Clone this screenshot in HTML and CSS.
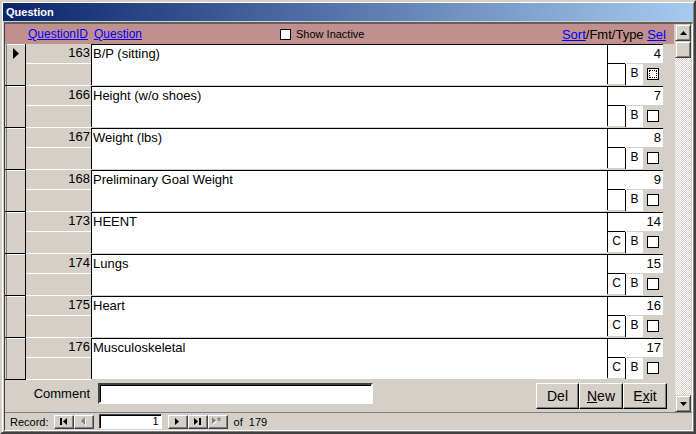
FILE: index.html
```html
<!DOCTYPE html>
<html>
<head>
<meta charset="utf-8">
<title>Question</title>
<link rel="stylesheet" href="styles.css">
</head>
<body>
<div class="window">
  <div class="titlebar">Question</div>
  <div class="client">
    <div class="main">
      <div class="form">
        <div class="hdr">
          <div class="h-id"><a class="lnk">QuestionID</a></div>
          <div class="h-q"><a class="lnk">Question</a></div>
          <div class="h-show"><span class="hcb"></span>Show Inactive</div>
          <div class="h-sort"><a class="lnk">Sort</a>/Fmt/Type <a class="lnk">Sel</a></div>
        </div>
        <div class="detail">
          <div class="row">
            <div class="sel"><svg class="cur" width="7" height="11" viewBox="0 0 7 11"><path d="M0 0L6 5.5L0 11Z"/></svg></div>
            <div class="idc"><div class="idv">163</div><div class="idb"></div></div>
            <div class="qbox">B/P (sitting)</div>
            <div class="srt"><div class="sv">4</div><div class="sb"><span class="cbx"></span><span class="bbx">B</span><span class="chk"><span class="focus"></span></span></div></div>
          </div>
          <div class="row">
            <div class="sel"></div>
            <div class="idc"><div class="idv">166</div><div class="idb"></div></div>
            <div class="qbox">Height (w/o shoes)</div>
            <div class="srt"><div class="sv">7</div><div class="sb"><span class="cbx"></span><span class="bbx">B</span><span class="chk"></span></div></div>
          </div>
          <div class="row">
            <div class="sel"></div>
            <div class="idc"><div class="idv">167</div><div class="idb"></div></div>
            <div class="qbox">Weight (lbs)</div>
            <div class="srt"><div class="sv">8</div><div class="sb"><span class="cbx"></span><span class="bbx">B</span><span class="chk"></span></div></div>
          </div>
          <div class="row">
            <div class="sel"></div>
            <div class="idc"><div class="idv">168</div><div class="idb"></div></div>
            <div class="qbox">Preliminary Goal Weight</div>
            <div class="srt"><div class="sv">9</div><div class="sb"><span class="cbx"></span><span class="bbx">B</span><span class="chk"></span></div></div>
          </div>
          <div class="row">
            <div class="sel"></div>
            <div class="idc"><div class="idv">173</div><div class="idb"></div></div>
            <div class="qbox">HEENT</div>
            <div class="srt"><div class="sv">14</div><div class="sb"><span class="cbx">C</span><span class="bbx">B</span><span class="chk"></span></div></div>
          </div>
          <div class="row">
            <div class="sel"></div>
            <div class="idc"><div class="idv">174</div><div class="idb"></div></div>
            <div class="qbox">Lungs</div>
            <div class="srt"><div class="sv">15</div><div class="sb"><span class="cbx">C</span><span class="bbx">B</span><span class="chk"></span></div></div>
          </div>
          <div class="row">
            <div class="sel"></div>
            <div class="idc"><div class="idv">175</div><div class="idb"></div></div>
            <div class="qbox">Heart</div>
            <div class="srt"><div class="sv">16</div><div class="sb"><span class="cbx">C</span><span class="bbx">B</span><span class="chk"></span></div></div>
          </div>
          <div class="row">
            <div class="sel"></div>
            <div class="idc"><div class="idv">176</div><div class="idb"></div></div>
            <div class="qbox">Musculoskeletal</div>
            <div class="srt"><div class="sv">17</div><div class="sb"><span class="cbx">C</span><span class="bbx">B</span><span class="chk"></span></div></div>
          </div>
        </div>
        <div class="footer">
          <div class="cmt-l">Comment</div>
          <div class="cmt"></div>
          <div class="btns">
            <button class="btn b-del">Del</button>
            <button class="btn b-new"><u>N</u>ew</button>
            <button class="btn b-exit">E<u>x</u>it</button>
          </div>
        </div>
      </div>
      <div class="vscroll">
        <div class="sbtn"><svg width="7" height="4" viewBox="0 0 7 4"><path d="M0 4L3.5 0L7 4Z"/></svg></div>
        <div class="sbtn thumb"></div>
        <div class="track"></div>
        <div class="sbtn"><svg width="7" height="4" viewBox="0 0 7 4"><path d="M0 0L7 0L3.5 4Z"/></svg></div>
      </div>
    </div>
    <div class="nav">
      <span class="rec">Record:</span>
      <div class="nbtn n-first"><svg width="8" height="7" viewBox="0 0 8 7"><rect x="0" y="0" width="2" height="7"/><path d="M7 0L7 7L3 3.5Z"/></svg></div>
      <div class="nbtn dis"><svg width="6" height="9" viewBox="0 0 6 9"><path class="hl" d="M5 1L5 9L1 5Z"/><path d="M4 0L4 8L0 4Z"/></svg></div>
      <div class="nbox">1</div>
      <div class="nbtn n-next"><svg width="5" height="7" viewBox="0 0 5 7"><path d="M0 0L4 3.5L0 7Z"/></svg></div>
      <div class="nbtn"><svg width="8" height="7" viewBox="0 0 8 7"><path d="M0 0L4 3.5L0 7Z"/><rect x="5" y="0" width="2" height="7"/></svg></div>
      <div class="nbtn dis"><svg width="12" height="9" viewBox="0 0 12 9"><path class="hl" d="M1 1L5 4.5L1 8Z"/><path d="M0 0L4 3.5L0 7Z"/><text class="star" x="5" y="8">*</text></svg></div>
      <span class="of">of&nbsp; 179</span>
    </div>
  </div>
</div>
</body>
</html>
```

FILE: styles.css
```css
* { box-sizing: border-box; margin: 0; padding: 0; }
html, body {
  width: 696px;
  height: 434px;
  overflow: hidden;
  background: #D4D0C8;
}
body {
  font-family: "Liberation Sans", Arial, sans-serif;
  color: #000;
}

.window {
  width: 696px;
  height: 434px;
  border: 2px solid;
  border-color: #D4D0C8 #404040 #404040 #D4D0C8;
  padding: 1px;
  box-shadow: inset 1px 1px #fff, inset -1px -1px #808080;
  background: #D4D0C8;
  display: flex;
  flex-direction: column;
}

.titlebar {
  height: 18px;
  flex: none;
  background: linear-gradient(to right, #0A246A, #A6CAF0);
  color: #fff;
  font-weight: bold;
  font-size: 11px;
  line-height: 18px;
  padding-left: 3px;
}

.client {
  flex: 1;
  margin-top: 1px;
  margin-left: 1px;
  border-top: 2px solid #606060;
  border-left: 1px solid #404040;
  border-right: 1px solid #fff;
  border-bottom: 1px solid #fff;
  display: flex;
  flex-direction: column;
}

.main {
  height: 388px;
  display: flex;
  flex: none;
}

.form {
  width: 669px;
  display: flex;
  flex-direction: column;
}

/* header */
.hdr {
  height: 20px;
  background: #C0908E;
  display: grid;
  grid-template-columns: 86px 189px 1fr auto;
  align-items: center;
  font-size: 12px;
}
.lnk { color: #0000FF; text-decoration: underline; }
.h-id { text-align: right; padding-right: 3px; }
.h-q { padding-left: 3px; }
.h-show { display: flex; align-items: center; font-size: 11px; }
.hcb {
  width: 11px;
  height: 11px;
  border: 1px solid #000;
  background: #fff;
  margin-right: 5px;
}
.h-sort { padding-right: 8px; font-size: 13px; }

/* detail */
.detail {
  height: 336px;
  display: flex;
  flex-direction: column;
}
.row {
  height: 42px;
  flex: none;
  display: grid;
  grid-template-columns: 21px 65px 516px 57px 1fr;
  font-size: 13px;
}
.sel {
  box-shadow: inset 1px 0 #D4D0C8, inset 2px 0 #808080, inset 0 1px #fff;
  border-right: 1px solid #000;
  border-bottom: 1px solid #000;
  padding: 4px 0 0 8px;
}
.cur { display: block; }
.idc {
  display: flex;
  flex-direction: column;
  border-bottom: 1px solid #fff;
}
.idv {
  height: 20px;
  border-bottom: 1px solid #fff;
  text-align: right;
  padding-right: 1px;
  line-height: 18px;
}
.idb { flex: 1; }
.qbox {
  height: 41px;
  background: #fff;
  border-top: 1px solid #000;
  border-left: 1px solid #000;
  line-height: 17px;
  padding-left: 1px;
}
.srt { display: flex; flex-direction: column; }
.sv {
  width: 56px;
  height: 19px;
  background: #fff;
  border-top: 1px solid #000;
  border-left: 1px solid #000;
  text-align: right;
  padding-right: 2px;
  line-height: 17px;
}
.sb {
  height: 22px;
  display: flex;
  align-items: flex-start;
  font-size: 12px;
}
.cbx {
  width: 18px;
  height: 21px;
  background: #fff;
  border-top: 1px solid #000;
  border-left: 1px solid #000;
  text-align: center;
  line-height: 19px;
}
.bbx {
  width: 18px;
  height: 21px;
  margin-top: 1px;
  background: #fff;
  border-left: 1px solid #000;
  text-align: center;
  line-height: 19px;
}
.chk {
  width: 12px;
  height: 12px;
  margin: 5px 0 0 4px;
  border: 1px solid #000;
  background: #fff;
  display: flex;
  padding: 1px;
}
.focus {
  flex: 1;
  border: 1px dotted #000;
}

/* footer */
.footer {
  flex: 1;
  display: flex;
  align-items: flex-start;
  padding-top: 3px;
  font-size: 13px;
}
.cmt-l {
  width: 86px;
  text-align: right;
  padding-right: 1px;
  line-height: 21px;
}
.cmt {
  width: 275px;
  height: 21px;
  margin-left: 7px;
  background: #fff;
  border: 2px solid;
  border-color: #404040 #fff #fff #404040;
  box-shadow: inset 1px 1px #000;
}
.btns {
  margin-left: auto;
  margin-right: 7px;
  display: flex;
}
.btn {
  height: 26px;
  font-family: "Liberation Sans", Arial, sans-serif;
  font-size: 14px;
  color: #000;
  background: #D4D0C8;
  border: 1px solid;
  border-color: #fff #000 #000 #fff;
  box-shadow: inset -1px -1px #808080;
}
.b-del { width: 43px; }
.b-new { width: 44px; }
.b-exit { width: 44px; }

/* vertical scrollbar */
.vscroll {
  width: 16px;
  margin-left: 1px;
  display: flex;
  flex-direction: column;
}
.sbtn {
  height: 17px;
  flex: none;
  background: #D4D0C8;
  border: 1px solid;
  border-color: #D4D0C8 #404040 #404040 #D4D0C8;
  box-shadow: inset 1px 1px #fff, inset -1px -1px #808080;
  display: flex;
  align-items: center;
  justify-content: center;
}
.sbtn svg { display: block; }
.track {
  flex: 1;
  background: repeating-conic-gradient(#fff 0 25%, #D4D0C8 0 50%) 0 0 / 2px 2px;
}

/* record navigation */
.nav {
  height: 18px;
  flex: none;
  border-top: 1px solid #808080;
  display: flex;
  align-items: center;
  padding-left: 5px;
  font-size: 11px;
}
.rec { margin-right: 5px; }
.nbtn {
  width: 20px;
  height: 14px;
  background: #D4D0C8;
  border: 1px solid;
  border-color: #fff #404040 #404040 #fff;
  box-shadow: inset -1px -1px #808080;
  display: flex;
  align-items: center;
  justify-content: center;
}
.nbtn svg { display: block; fill: #000; }
.nbtn.dis svg { fill: #808080; }
.nbtn.dis .hl { fill: #fff; }
.star { font-size: 10px; font-family: "Liberation Sans", Arial, sans-serif; font-weight: bold; }
.nbox {
  width: 63px;
  height: 15px;
  margin: 0 6px 0 5px;
  background: #fff;
  border: 1px solid;
  border-color: #404040 #fff #fff #404040;
  box-shadow: inset 1px 1px #000;
  text-align: right;
  padding-right: 2px;
  line-height: 13px;
}
.of { margin-left: 6px; }
```
